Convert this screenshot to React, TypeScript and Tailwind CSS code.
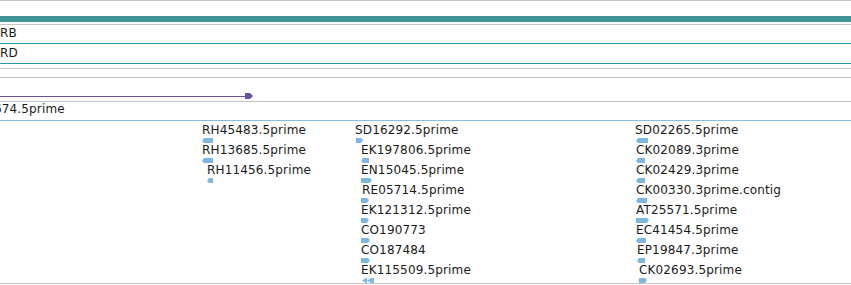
type Feat = {
  label: string
  tx: number
  gx: number
  gw: number
  dir: "l" | "r" | "ll"
}

const colA: Feat[] = [
  { label: "RH45483.5prime", tx: 1, gx: 1, gw: 11, dir: "l" },
  { label: "RH13685.5prime", tx: 1, gx: 1, gw: 11, dir: "l" },
  { label: "RH11456.5prime", tx: 6, gx: 6, gw: 6, dir: "l" },
]

const colB: Feat[] = [
  { label: "SD16292.5prime", tx: 0, gx: 1, gw: 7, dir: "r" },
  { label: "EK197806.5prime", tx: 6, gx: 6, gw: 8, dir: "l" },
  { label: "EN15045.5prime", tx: 6, gx: 6, gw: 11, dir: "r" },
  { label: "RE05714.5prime", tx: 7, gx: 6, gw: 8, dir: "r" },
  { label: "EK121312.5prime", tx: 6, gx: 6, gw: 8, dir: "r" },
  { label: "CO190773", tx: 6, gx: 6, gw: 9, dir: "r" },
  { label: "CO187484", tx: 6, gx: 6, gw: 9, dir: "r" },
  { label: "EK115509.5prime", tx: 6, gx: 7, gw: 12, dir: "ll" },
]

const colC: Feat[] = [
  { label: "SD02265.5prime", tx: 0, gx: 1, gw: 12, dir: "l" },
  { label: "CK02089.3prime", tx: 1, gx: 1, gw: 9, dir: "l" },
  { label: "CK02429.3prime", tx: 1, gx: 1, gw: 9, dir: "l" },
  { label: "CK00330.3prime.contig", tx: 1, gx: 1, gw: 11, dir: "l" },
  { label: "AT25571.5prime", tx: 1, gx: 1, gw: 13, dir: "r" },
  { label: "EC41454.5prime", tx: 1, gx: 1, gw: 10, dir: "l" },
  { label: "EP19847.3prime", tx: 2, gx: 2, gw: 8, dir: "l" },
  { label: "CK02693.5prime", tx: 4, gx: 4, gw: 8, dir: "r" },
]

const BLUE = "#7db7e0"

function Glyph({ w, dir }: { w: number; dir: Feat["dir"] }) {
  let pts = ""
  if (dir === "l") pts = `0,3 2,0 ${w},0 ${w},5 2,5`
  if (dir === "r") pts = `0,0 ${w - 2},0 ${w},2 ${w - 2},5 0,5`
  return (
    <svg width={w} height={5} viewBox={`0 0 ${w} 5`} className="block">
      {dir === "ll" ? (
        <>
          <polygon points="0,2.5 4,0 5,0 5,5 4,5" fill={BLUE} />
          <polygon points="5,2.5 9,0 12,0 12,5 9,5" fill={BLUE} />
        </>
      ) : (
        <polygon points={pts} fill={BLUE} />
      )}
    </svg>
  )
}

function Column({ items, className }: { items: Feat[]; className: string }) {
  return (
    <div className={`flex flex-col ${className}`}>
      {items.map((f) => (
        <div key={f.label} className="h-[20px]">
          <div className="h-[15px] leading-[14px] whitespace-nowrap" style={{ paddingLeft: f.tx }}>
            {f.label}
          </div>
          <div style={{ paddingLeft: f.gx }}>
            <Glyph w={f.gw} dir={f.dir} />
          </div>
        </div>
      ))}
    </div>
  )
}

export default function App() {
  return (
    <div className="w-[851px] h-[285px] overflow-hidden bg-white text-[#1a1a1a] text-[12px] tracking-[0.15px] font-['DejaVu_Sans',sans-serif]">
      <div className="h-px bg-[#c4c4c4]" />
      <div className="h-[15px]" />
      <div className="h-[6px] bg-[#3f9494]" />
      <div className="h-[2px]" />
      <div className="h-px bg-[#c4c4c4]" />
      <div className="h-[18px] pt-px leading-[14px]">RB</div>
      <div className="h-px bg-[#2a93ad]" />
      <div className="h-[19px] pt-[2px] leading-[14px]">RD</div>
      <div className="h-px bg-[#2a93ad]" />
      <div className="h-[4px]" />
      <div className="h-px bg-[#c4c4c4]" />
      <div className="h-[8px]" />
      <div className="h-px bg-[#c4c4c4]" />
      <div className="h-[23px] flex flex-col pt-[15px]">
        <div className="flex items-center h-[6px]">
          <div className="w-[245px] h-px bg-[#6a50a6]" />
          <svg width="8" height="6" viewBox="0 0 8 6" className="block">
            <polygon points="0,0 5,0 8,3 5,6 0,6" fill="#6a50a6" />
          </svg>
        </div>
      </div>
      <div className="h-px bg-[#c4c4c4]" />
      <div className="h-[18px] leading-[14px] whitespace-nowrap ml-[-6px]">674.5prime</div>
      <div className="h-px bg-[#86bfe6]" />
      <div className="h-[162px] flex pt-[2px] overflow-hidden">
        <Column items={colA} className="ml-[201px] w-[154px]" />
        <Column items={colB} className="w-[280px]" />
        <Column items={colC} className="" />
      </div>
      <div className="h-px bg-[#c4c4c4]" />
    </div>
  )
}
